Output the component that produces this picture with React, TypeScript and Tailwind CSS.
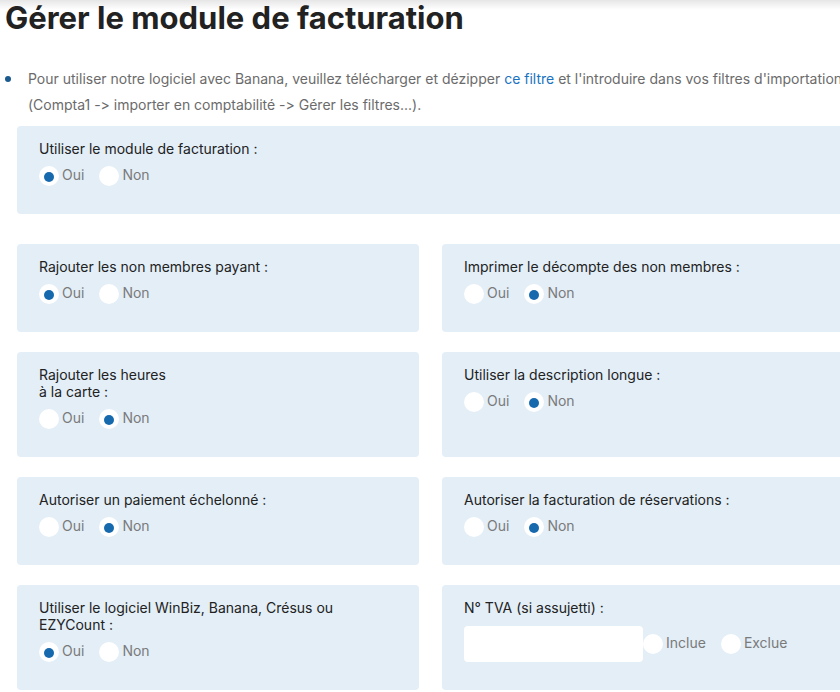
type Choice = { label: string; checked?: boolean }

function Radio({ label, checked }: Choice) {
  return (
    <label className="flex items-center gap-[3px]">
      <span className="w-5 h-5 rounded-full bg-white flex items-center justify-center shrink-0">
        {checked && <span className="w-[10px] h-[10px] rounded-full bg-[#1669ad] mt-[1px] -ml-[1px]" />}
      </span>
      <span className="text-[14px] leading-[17px] text-[#7a7a7a] -mt-[3px]">{label}</span>
    </label>
  )
}

function Panel({ title, choices, className = '' }: { title: React.ReactNode; choices: Choice[]; className?: string }) {
  return (
    <div className={`bg-[#e3eef7] rounded-[4px] pl-[22px] pr-4 pt-[14px] pb-[28px] ${className}`}>
      <p className="text-[14px] leading-[17px] text-[#222]">{title}</p>
      <div className="flex items-center gap-[15px] mt-[9px]">
        {choices.map(c => <Radio key={c.label} {...c} />)}
      </div>
    </div>
  )
}

const yes = [{ label: 'Oui', checked: true }, { label: 'Non' }]
const no  = [{ label: 'Oui' }, { label: 'Non', checked: true }]

export default function App() {
  return (
    <div className="w-[840px] h-[692px] overflow-hidden bg-[linear-gradient(to_bottom,#e6e6e6,#ffffff_10px)] font-['Inter',sans-serif] [font-feature-settings:'calt'_0]">
      <div className="w-[900px]">
        {/* Titre */}
        <h1 className="pl-[5px] text-[31px] leading-[36px] font-bold text-[#222]">
          Gérer le module de facturation
        </h1>

        {/* Info Banana */}
        <ul className="mt-[30px] pl-[5px]">
          <li className="flex text-[14px] leading-[26px] text-[#6b6b6b]">
            <span className="w-[6px] h-[6px] rounded-full bg-[#1b5a8e] mt-[10px] shrink-0" />
            <span className="pl-[17px] whitespace-nowrap">
              Pour utiliser notre logiciel avec Banana, veuillez télécharger et dézipper{' '}
              <a className="text-[#1a73c0]">ce filtre</a> et l'introduire dans vos filtres d'importation
              <br />
              (Compta1 -&gt; importer en comptabilité -&gt; Gérer les filtres...).
            </span>
          </li>
        </ul>

        <div className="pl-[17px] mt-[8px]">
          <Panel title="Utiliser le module de facturation :" choices={yes} className="w-[827px]" />

          <div className="grid grid-cols-[402px_402px] gap-x-[23px] gap-y-[20px] mt-[30px]">
            <Panel title="Rajouter les non membres payant :" choices={yes} />
            <Panel title="Imprimer le décompte des non membres :" choices={no} />

            <Panel title={<>Rajouter les heures<br />à la carte :</>} choices={no} />
            <Panel title="Utiliser la description longue :" choices={no} />

            <Panel title="Autoriser un paiement échelonné :" choices={no} />
            <Panel title="Autoriser la facturation de réservations :" choices={no} />

            <Panel title={<>Utiliser le logiciel WinBiz, Banana, Crésus ou<br />EZYCount :</>} choices={yes} />
            <div className="bg-[#e3eef7] rounded-[4px] pl-[22px] pt-[14px] pb-[28px]">
              <p className="text-[14px] leading-[17px] text-[#222]">N° TVA (si assujetti) :</p>
              <div className="flex items-center mt-[10px]">
                <input className="w-[179px] h-9 rounded-[4px] bg-white outline-none" />
                <div className="flex items-center gap-[15px]">
                  <Radio label="Inclue" />
                  <Radio label="Exclue" />
                </div>
              </div>
            </div>
          </div>
        </div>
      </div>
    </div>
  )
}
